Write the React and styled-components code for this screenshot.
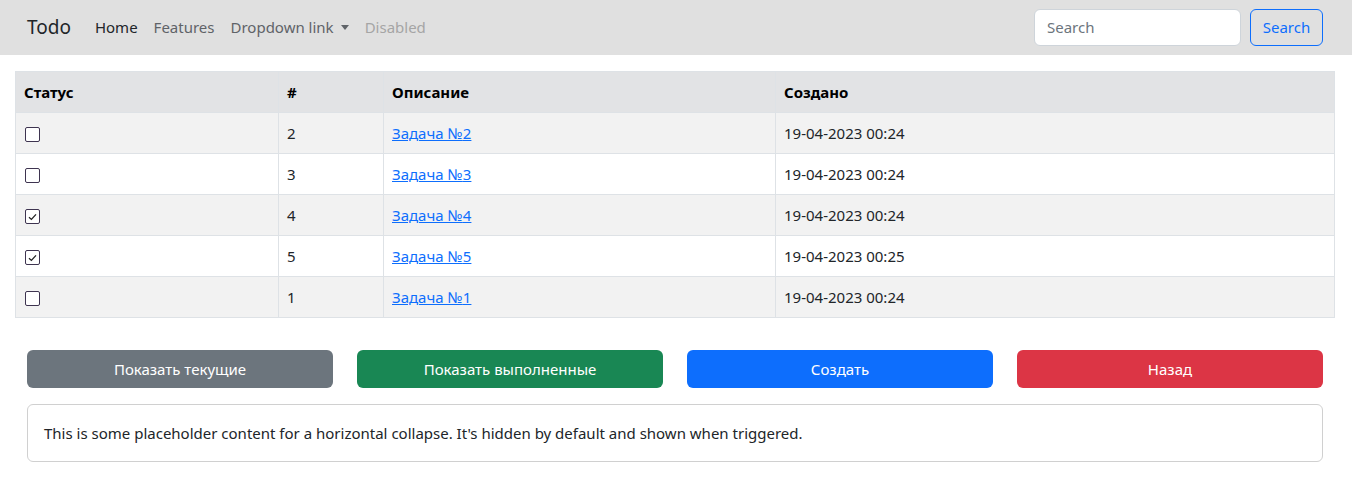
import React from 'react'
import styled, { createGlobalStyle } from 'styled-components'

const Global = createGlobalStyle`
    body {
        margin: 0;
        font-family: "Noto Sans", "Open Sans", sans-serif;
        font-size: 16px;
        color: #212529;
        background: #fff;
    }
    * { box-sizing: border-box; }
`

const Nav = styled.nav`
    height: 55px;
    background: #e0e0e0;
    display: flex;
    align-items: center;
    padding: 0 29px 1px 27px;
    font-size: 15px;
`

const Brand = styled.a`
    font-size: 19px;
    color: #212529;
    margin-right: 24px;
    text-decoration: none;
`

const Links = styled.div`
    display: flex;
    align-items: center;
    gap: 16px;
    flex: 1;
`

const Link = styled.a`
    color: ${p => p.active ? '#212529' : p.disabled ? '#a5a5a5' : '#5f6368'};
    text-decoration: none;
    display: flex;
    align-items: center;
    gap: 7px;
`

const Caret = styled.span`
    width: 0;
    height: 0;
    border-left: 4px solid transparent;
    border-right: 4px solid transparent;
    border-top: 5px solid #5f6368;
`

const SearchForm = styled.form`
    display: flex;
    gap: 9px;
`

const Input = styled.input`
    width: 207px;
    height: 37px;
    border: 1px solid #ced4da;
    border-radius: 6px;
    padding: 0 12px;
    font: inherit;
    color: #212529;
    &::placeholder { color: #6c757d; }
`

const OutlineButton = styled.button`
    height: 37px;
    width: 73px;
    padding: 0;
    border: 1px solid #0d6efd;
    border-radius: 6px;
    background: transparent;
    color: #0d6efd;
    font: inherit;
`

const Main = styled.main`
    padding: 16px 17px 0 15px;
`

const Table = styled.table`
    width: 100%;
    border-collapse: collapse;
    th, td {
        border: 1px solid #dee2e6;
        height: 41px;
        padding: 0 8px;
        text-align: left;
        font-size: 15px;
    }
    th { background: #e2e3e5; font-weight: 700; color: #000; }
    tbody tr:nth-child(odd) td { background: #f2f2f2; }
    td a { color: #0d6efd; }
`

const CheckBox = styled.span`
    display: inline-flex;
    align-items: center;
    justify-content: center;
    width: 15px;
    height: 15px;
    margin-left: 1px;
    border: 1px solid #3e3450;
    border-radius: 2px;
    background: #fff;
    vertical-align: middle;
`

const Controls = styled.div`
    padding: 32px 29px 16px 27px;
    display: flex;
    flex-direction: column;
    gap: 16px;
`

const ButtonRow = styled.div`
    display: grid;
    grid-template-columns: repeat(4, 1fr);
    gap: 24px;
`

const ActionButton = styled.button`
    height: 38px;
    border: none;
    border-radius: 6px;
    color: #fff;
    font: inherit;
    font-size: 15px;
    background: ${p => p.bg};
`

const Card = styled.div`
    border: 1px solid #d0d0d0;
    border-radius: 6px;
    padding: 0 16px;
    height: 58px;
    display: flex;
    align-items: center;
    font-size: 15px;
`

const Check = ({ checked }) => (
    <CheckBox>
        {checked && (
            <svg width="9" height="8" viewBox="0 0 9 8">
                <path d="M1 4.2 L3.4 6.4 L8 1.4" fill="none" stroke="#222" strokeWidth="1.3" />
            </svg>
        )}
    </CheckBox>
)

const rows = [
    { id: 2, done: false, time: '00:24' },
    { id: 3, done: false, time: '00:24' },
    { id: 4, done: true, time: '00:24' },
    { id: 5, done: true, time: '00:25' },
    { id: 1, done: false, time: '00:24' },
]

const App = () => {
    return (
        <>
            <Global />
            <Nav>
                <Brand>Todo</Brand>
                <Links>
                    <Link active>Home</Link>
                    <Link>Features</Link>
                    <Link>Dropdown link <Caret /></Link>
                    <Link disabled>Disabled</Link>
                </Links>
                <SearchForm onSubmit={e => e.preventDefault()}>
                    <Input placeholder="Search" />
                    <OutlineButton>Search</OutlineButton>
                </SearchForm>
            </Nav>
            <Main>
                <Table>
                    <colgroup>
                        <col style={{ width: 263 }} />
                        <col style={{ width: 105 }} />
                        <col style={{ width: 392 }} />
                        <col />
                    </colgroup>
                    <thead>
                        <tr>
                            <th>Статус</th>
                            <th>#</th>
                            <th>Описание</th>
                            <th>Создано</th>
                        </tr>
                    </thead>
                    <tbody>
                        {rows.map(r => (
                            <tr key={r.id}>
                                <td><Check checked={r.done} /></td>
                                <td>{r.id}</td>
                                <td><a href="#">Задача №{r.id}</a></td>
                                <td>19-04-2023 {r.time}</td>
                            </tr>
                        ))}
                    </tbody>
                </Table>
            </Main>
            <Controls>
                <ButtonRow>
                    <ActionButton bg="#6c757d">Показать текущие</ActionButton>
                    <ActionButton bg="#198754">Показать выполненные</ActionButton>
                    <ActionButton bg="#0d6efd">Создать</ActionButton>
                    <ActionButton bg="#dc3545">Назад</ActionButton>
                </ButtonRow>
                <Card>This is some placeholder content for a horizontal collapse. It's hidden by default and shown when triggered.</Card>
            </Controls>
        </>
    )
}

export default App
